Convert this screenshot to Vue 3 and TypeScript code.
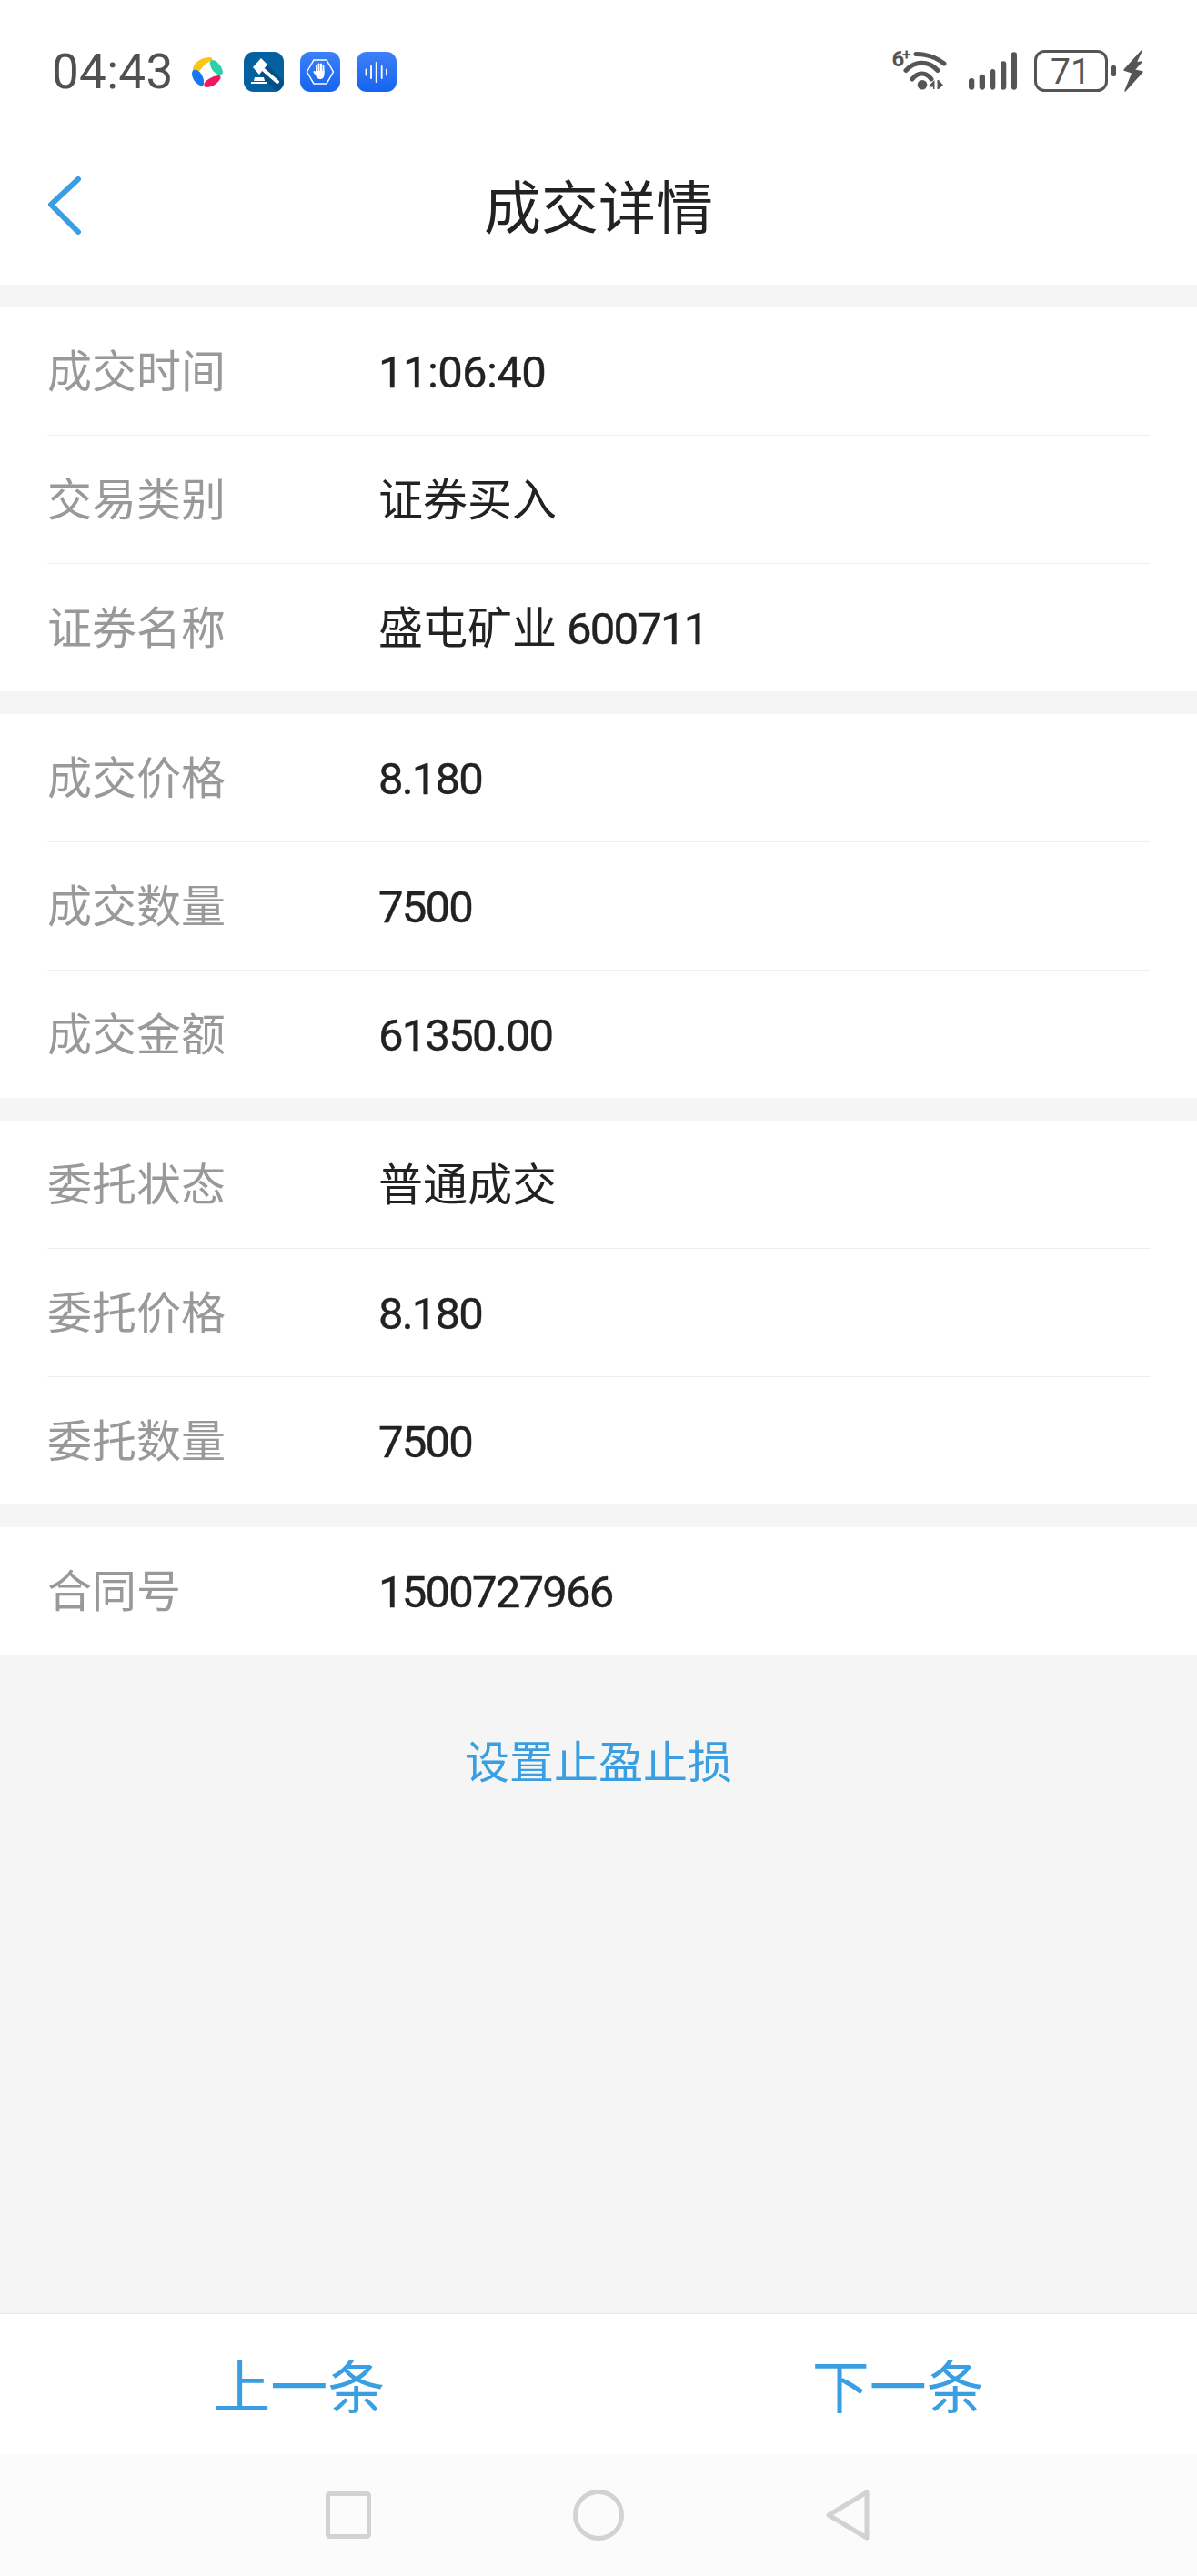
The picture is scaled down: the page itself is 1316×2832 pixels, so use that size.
<script setup lang="ts">
interface Row {
  label: string
  name?: string
  num?: string
}

const groups: Row[][] = [
  [
    { label: '成交时间', num: '11:06:40' },
    { label: '交易类别', name: '证券买入' },
    { label: '证券名称', name: '盛屯矿业', num: '600711' },
  ],
  [
    { label: '成交价格', num: '8.180' },
    { label: '成交数量', num: '7500' },
    { label: '成交金额', num: '61350.00' },
  ],
  [
    { label: '委托状态', name: '普通成交' },
    { label: '委托价格', num: '8.180' },
    { label: '委托数量', num: '7500' },
  ],
  [{ label: '合同号', num: '1500727966' }],
]
</script>

<template>
  <div class="page">
    <div class="status-bar">
      <span class="time">04:43</span>
      <svg class="app-dot" width="34" height="34" viewBox="0 0 34 34">
        <path d="M1 14C2 7 10 1 20 1c3 0 3 3 1 4-5 2-9 5-11 9-2 4-9 4-9 0z" fill="#fcc419" />
        <path d="M23 4c5 1 10 7 11 13 0 3-3 4-5 3-5-2-8-6-9-11-1-3 1-5 3-5z" fill="#2fd0a8" />
        <path d="M2 15c3-1 6 1 8 4 2 3 3 6 3 9 1 3-1 5-4 4-5-2-9-8-9-13 0-2 1-4 2-4z" fill="#1677f2" />
        <path d="M16 34c-3 0-3-3-2-5 3-4 8-7 15-8 3 0 3 2 2 4-3 5-9 9-15 9z" fill="#f0185c" />
      </svg>
      <svg class="app-icon" width="44" height="44" viewBox="0 0 44 44">
        <rect width="44" height="44" rx="11" fill="#04609f" />
        <path d="M17 25 36 44h-3 0a11 11 0 0 0 11-11V40 33L26 14z" fill="#034f87" />
        <path d="M10 17 19 7l7 7-9 11z" fill="#fff" />
        <path d="m22 20 15 13" stroke="#fff" stroke-width="4" stroke-linecap="round" />
        <path d="M12 28h10l1 4H11zM8 33h17v2H8z" fill="#fff" />
      </svg>
      <svg class="app-icon" width="44" height="44" viewBox="0 0 44 44">
        <defs>
          <linearGradient id="blue-a" x1="0" y1="0" x2="0" y2="1">
            <stop offset="0" stop-color="#3e80f6" />
            <stop offset="1" stop-color="#1464f0" />
          </linearGradient>
        </defs>
        <rect width="44" height="44" rx="11" fill="url(#blue-a)" />
        <path d="M7.500 22 15 9h14l7.500 13L29 35H15z" fill="none" stroke="#fff" stroke-width="1.500" />
        <path d="M18 15v7M20.500 13.500V22M23 13.500V22M25.500 15v8" stroke="#fff" stroke-width="2" stroke-linecap="round" />
        <path d="M17 21h9.500v4c0 3-2 5-4.500 5-3 0-4-2-5-4l-2.500-3.500c-.5-1 1-2 2-1l1 1z" fill="#fff" />
      </svg>
      <svg class="app-icon" width="44" height="44" viewBox="0 0 44 44">
        <rect width="44" height="44" rx="11" fill="url(#blue-a)" />
        <path d="M10.500 19.500v6M16 16v13M21.700 12v21M27.700 16v13M33 19.500v6" stroke="#fff" stroke-width="1.800" stroke-linecap="round" />
      </svg>
      <svg class="status-right" width="276" height="48" viewBox="0 0 276 48">
        <text x="0.500" y="18" class="wifi-six">6</text>
        <text x="12" y="11" class="wifi-plus">+</text>
        <path d="M27 4.500c11 0 22 3 31 10.500" fill="none" stroke="#555" stroke-width="5" stroke-linecap="round" />
        <path d="M16 22.500c10-11 25-11 35 0" fill="none" stroke="#555" stroke-width="5" stroke-linecap="round" />
        <path d="M23 32c6-8 15-8 21 0" fill="none" stroke="#555" stroke-width="5" stroke-linecap="round" />
        <circle cx="34" cy="38.300" r="5.300" fill="#555" />
        <path d="m41.500 39 6-6v10h-1.500v-2.500h-4.500zM50.500 33h1.500l5 5.500-5 4.500h-1.500z" fill="#555" />
        <rect x="85" y="31" width="6.300" height="12.700" rx="3.100" fill="#555" />
        <rect x="96.700" y="26.700" width="6.300" height="17" rx="3.100" fill="#555" />
        <rect x="108" y="21" width="6.300" height="22.700" rx="3.100" fill="#555" />
        <rect x="120" y="12.300" width="6.300" height="31.400" rx="3.100" fill="#555" />
        <rect x="131.700" y="2.300" width="6.300" height="41.400" rx="3.100" fill="#555" />
        <rect x="158.500" y="1.500" width="78" height="43" rx="10" fill="none" stroke="#555" stroke-width="3" />
        <text x="197" y="37" class="battery">71</text>
        <rect x="242" y="17" width="5" height="12" rx="2" fill="#555" />
        <path d="M275 1 256 22l9 3-8 20 19-21-9-2 8-9-6 1z" fill="#555" stroke="#555" stroke-width="1.500" stroke-linejoin="round" />
      </svg>
    </div>

    <header class="nav-bar">
      <svg class="back" width="40" height="68" viewBox="0 0 40 68">
        <path d="M34 5 4 33l30 30" fill="none" stroke="#399ee2" stroke-width="6" stroke-linecap="round" stroke-linejoin="round" />
      </svg>
      <h1 class="title">成交详情</h1>
    </header>

    <main class="content">
      <section v-for="(group, i) in groups" :key="i" class="group">
        <div v-for="row in group" :key="row.label" class="row">
          <span class="label">{{ row.label }}</span>
          <span class="value">
            <span v-if="row.name">{{ row.name }}</span>
            <span v-if="row.name && row.num">&nbsp;</span>
            <span v-if="row.num" class="num" :class="{ 'num-time': row.num.includes(':') }">{{ row.num }}</span>
          </span>
        </div>
      </section>
      <a class="link">设置止盈止损</a>
    </main>

    <footer class="pager">
      <button class="pager-btn">上一条</button>
      <button class="pager-btn">下一条</button>
    </footer>

    <nav class="system-nav">
      <svg width="50" height="52" viewBox="0 0 50 52">
        <rect x="2.500" y="2.500" width="45" height="47" rx="2" fill="none" stroke="#d2d2d2" stroke-width="5" />
      </svg>
      <svg width="56" height="56" viewBox="0 0 56 56">
        <circle cx="28" cy="28" r="25.500" fill="none" stroke="#d2d2d2" stroke-width="5" />
      </svg>
      <svg width="50" height="58" viewBox="0 0 50 58">
        <path d="M45 4v50L3 29z" fill="none" stroke="#d2d2d2" stroke-width="5" stroke-linejoin="round" />
      </svg>
    </nav>
  </div>
</template>

<style>
body {
  margin: 0;
  background: #f5f5f5;
}
</style>

<style scoped>
.page {
  width: 1316px;
  height: 2832px;
  display: flex;
  flex-direction: column;
  font-family: "Noto Sans CJK SC", "Noto Sans", sans-serif;
  background: #f5f5f5;
}

.status-bar {
  height: 157px;
  flex: none;
  box-sizing: border-box;
  padding: 55px 0 0 57px;
  display: flex;
  align-items: flex-start;
  background: #fff;
}
.time {
  font-family: Roboto, sans-serif;
  font-size: 53px;
  line-height: 48px;
  letter-spacing: 0.300px;
  color: #505050;
  width: 154px;
}
.app-dot {
  margin: 7px 23px 0 0;
}
.app-icon {
  margin: 2px 18px 0 0;
}
.status-right {
  margin-left: auto;
  margin-right: 60px;
  overflow: visible;
}
.wifi-six {
  font: 700 24px Roboto, sans-serif;
  fill: #555;
}
.wifi-plus {
  font: 700 17px Roboto, sans-serif;
  fill: #555;
}
.battery {
  font: 400 39px Roboto, sans-serif;
  fill: #555;
  text-anchor: middle;
}

.nav-bar {
  height: 156px;
  flex: none;
  display: flex;
  align-items: center;
  justify-content: center;
  position: relative;
  background: #fff;
}
.back {
  position: absolute;
  left: 52px;
  top: 35px;
}
.title {
  margin: 0 0 24px;
  font-size: 63px;
  font-weight: 400;
  color: #222;
  line-height: 1;
}

.content {
  flex: 1;
  padding-top: 25px;
  display: flex;
  flex-direction: column;
}
.group {
  padding-left: 52px;
  padding-right: 52px;
  background: #fff;
  margin-bottom: 25px;
}
.group:nth-last-child(2) {
  margin-bottom: 0;
}
.row {
  height: 140px;
  display: flex;
  align-items: center;
  border-bottom: 1px solid #eee;
}
.row:last-child {
  border-bottom: none;
}
.label {
  width: 364px;
  margin-bottom: 7px;
  font-size: 49px;
  color: #999;
}
.value {
  margin-bottom: 7px;
  font-size: 49px;
  color: #222;
  white-space: nowrap;
}
.num {
  font-family: Roboto, sans-serif;
  letter-spacing: -1.800px;
  -webkit-text-stroke: 0.400px #222;
}
.num-time {
  letter-spacing: -0.600px;
}
.link {
  margin-top: 82px;
  font-size: 49px;
  line-height: 66px;
  color: #399ee2;
  text-align: center;
}

.pager {
  height: 155px;
  flex: none;
  display: flex;
  background: #fff;
  border-top: 1px solid #e8e8e8;
  box-sizing: border-box;
}
.pager-btn {
  flex: 1;
  border: none;
  background: none;
  padding: 0 0 4px;
  font-family: inherit;
  font-size: 63px;
  color: #399ee2;
}
.pager-btn:first-child {
  border-right: 1px solid #e8e8e8;
}

.system-nav {
  height: 134px;
  flex: none;
  display: flex;
  align-items: center;
  justify-content: center;
  gap: 222px;
  background: #fbfbfb;
}
</style>
